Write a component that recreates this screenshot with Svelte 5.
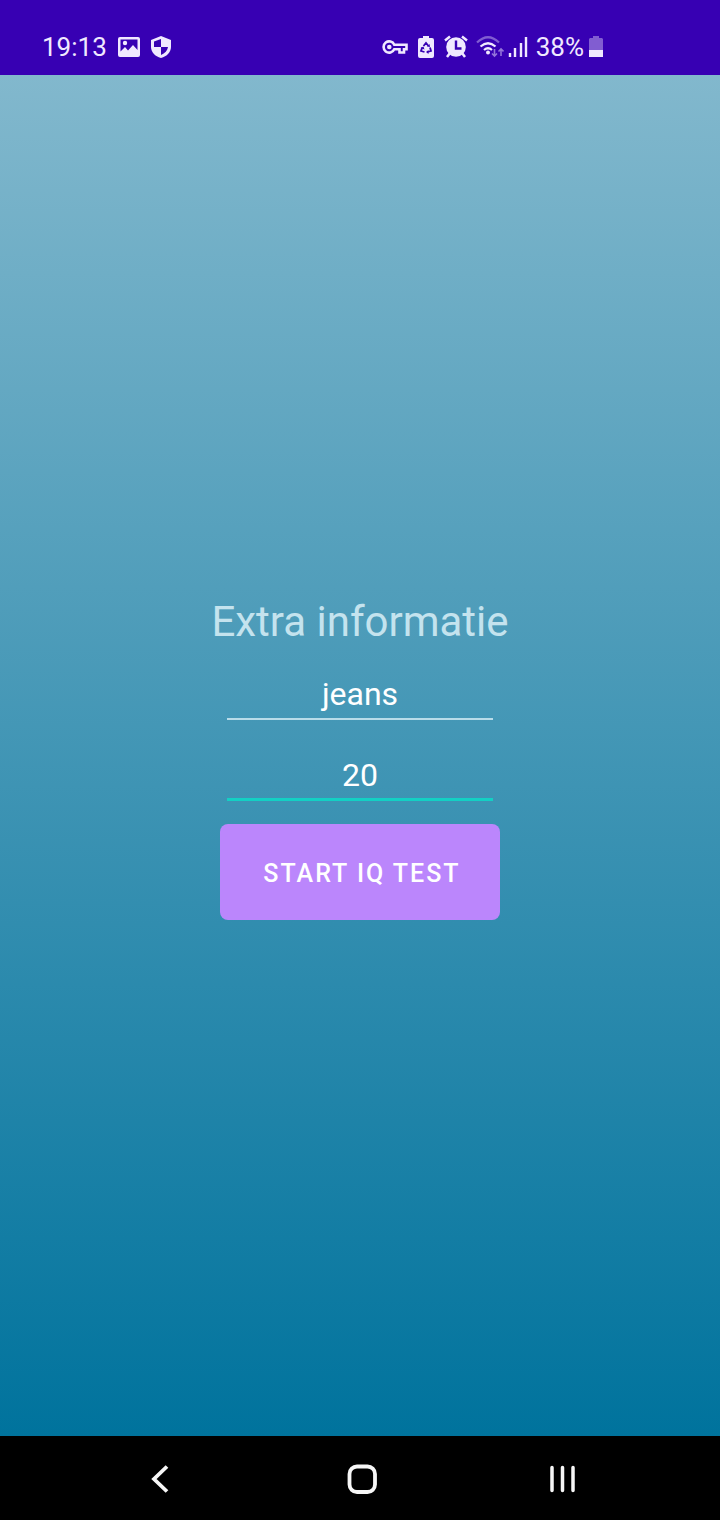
<script>
  let name = $state('jeans');
  let age = $state('20');
</script>

<div class="screen">
  <header>
    <div class="left">
      <span>19:13</span>
      <svg class="photo" width="22" height="22" viewBox="0 0 22 22" aria-hidden="true">
        <path fill="currentColor" fill-rule="evenodd" d="M2 1h18q2 0 2 2v16q0 2-2 2H2q-2 0-2-2V3Q0 1 2 1ZM2.500 3.500v12l4.500-4.500 3 3.500 5-5.500 4.500 5V3.500Z" />
        <circle cx="7" cy="7" r="2.200" fill="currentColor" />
      </svg>
      <svg width="20" height="24" viewBox="0 0 20 24" aria-hidden="true">
        <path fill="currentColor" fill-rule="evenodd" d="M10 1 0 5v7c0 5 4 9.500 10 11 6-1.500 10-6 10-11V5ZM10 4v8h7c-.5 3.500-3 6.500-7 8v-8H3V6.500Z" />
      </svg>
    </div>
    <div class="right">
      <svg width="26" height="24" viewBox="0 0 26 24" aria-hidden="true">
        <path fill="none" stroke="currentColor" stroke-width="2.600" d="M12.300 9.700A5.600 5.600 0 1 0 12.300 14.300H17.500V17.500H22V14.300H24.500V9.700Z" />
        <circle cx="7.300" cy="12" r="2.300" fill="currentColor" />
      </svg>
      <svg class="saver" width="16" height="24" viewBox="0 0 16 24" aria-hidden="true">
        <path fill="currentColor" d="M5 1h6v2h3q2 0 2 2v16q0 2-2 2H2q-2 0-2-2V5q0-2 2-2h3Z" />
        <path fill="none" stroke="#3700b3" stroke-width="1.800" d="m5.500 11 2.500-3 2.500 3M12 12.500l1 3.500-3.500 1M6.500 17 3 16l1.200-3.500" />
        <path fill="#3700b3" d="m9 11.500 3 .5-.5-3zM10.500 15v4L8 17zM2.500 13l3-1.500 1 3z" />
      </svg>
      <svg class="alarm" width="24" height="24" viewBox="0 0 24 24" aria-hidden="true">
        <circle cx="12" cy="12" r="9.800" fill="currentColor" />
        <path fill="none" stroke="currentColor" stroke-width="2.500" d="m1 5.500 5-4M23 5.500l-5-4M6 18l-3 4M18 18l3 4" />
        <path fill="none" stroke="#3700b3" stroke-width="2.400" d="M12 5.500v8h5.500" />
      </svg>
      <svg class="wifi" width="28" height="24" viewBox="0 0 28 24" aria-hidden="true">
        <g fill="none" stroke="currentColor" stroke-width="2.200">
          <path opacity=".4" d="M1 7.500Q12-3 23 7.500" />
          <path d="M4.500 11.500q7.500-6.500 15 0M8 15q4-3.500 8 0" />
        </g>
        <circle cx="12" cy="17.500" r="2" fill="currentColor" />
        <path opacity=".5" fill="none" stroke="currentColor" stroke-width="1.600" d="M18.500 14v7M16 18.500l2.500 2.500 2.500-2.500M25 21v-7M22.500 16.500 25 14l2.500 2.500" />
      </svg>
      <svg class="signal" width="20" height="24" viewBox="0 0 20 24" aria-hidden="true">
        <path fill="none" stroke="currentColor" stroke-width="2.400" d="M2 18v4M7 13v9M13 8v14M18 2v20" />
      </svg>
      <span>38%</span>
      <svg class="battery" width="14" height="24" viewBox="0 0 14 24" aria-hidden="true">
        <path opacity=".4" fill="currentColor" d="M4 1h6v2h3l1 1v11H0V4l1-1h3Z" />
        <path fill="currentColor" d="M0 15h14v7H0Z" />
      </svg>
    </div>
  </header>

  <main>
    <form onsubmit={(event) => event.preventDefault()}>
      <h1>Extra informatie</h1>
      <input type="text" aria-label="Naam" bind:value={name} />
      <input class="active" type="text" inputmode="numeric" aria-label="Leeftijd" bind:value={age} />
      <button class="start" type="submit">START IQ TEST</button>
    </form>
  </main>

  <nav>
    <button aria-label="Terug">
      <svg width="32" height="32" viewBox="0 0 32 32"><path fill="none" stroke="currentColor" stroke-width="3.800" d="M23 3.500 10 16l13 12.500" /></svg>
    </button>
    <button aria-label="Startscherm">
      <svg width="32" height="32" viewBox="0 0 32 32"><rect x="3.500" y="3.500" width="25.500" height="25.500" rx="7.500" fill="none" stroke="currentColor" stroke-width="3.800" /></svg>
    </button>
    <button aria-label="Recente apps">
      <svg width="32" height="32" viewBox="0 0 32 32"><path fill="none" stroke="currentColor" stroke-width="3.500" stroke-linecap="round" d="M5 4.500v23M15.500 4.500v23M26 4.500v23" /></svg>
    </button>
  </nav>
</div>

<style>
  :global(body) {
    margin: 0;
  }
  .screen {
    display: flex;
    flex-direction: column;
    min-height: 100vh;
    font-family: Roboto, sans-serif;
    color: #fff;
  }
  header {
    display: flex;
    justify-content: space-between;
    box-sizing: border-box;
    min-height: 75px;
    padding: 19px 117px 0 42px;
    background: #3700b3;
    color: #f0e8ff;
    font-size: 26px;
    line-height: 56px;
  }
  .left,
  .right {
    display: flex;
    align-items: center;
  }
  .left {
    gap: 11px;
  }
  .right {
    gap: 10px;
  }
  svg {
    display: block;
    flex: none;
  }
  .wifi {
    margin-left: -2px;
  }
  .signal {
    margin-left: -6px;
  }
  .signal + span {
    margin-left: -2px;
  }
  .battery {
    margin-left: -5px;
  }
  main {
    display: flex;
    flex: 1;
    align-items: center;
    justify-content: center;
    background: linear-gradient(#82b8cd, #00739d);
  }
  form {
    display: flex;
    flex-direction: column;
    align-items: center;
  }
  h1 {
    margin: 0 0 14px;
    font-size: 42px;
    font-weight: 400;
    line-height: 62px;
    color: #c4e3ee;
  }
  input {
    box-sizing: border-box;
    width: 266px;
    height: 53px;
    margin: 0 0 28px;
    padding: 3px 0 0;
    border: 0;
    border-bottom: 2px solid #b9dce9;
    border-radius: 0;
    outline: 0;
    background: none;
    color: #fff;
    font: 400 32px Roboto, sans-serif;
    text-align: center;
  }
  .active {
    margin-bottom: 23px;
    border-bottom: 3px solid #13d0c4;
  }
  button {
    border: 0;
    color: #fff;
    font-family: Roboto, sans-serif;
  }
  .start {
    width: 280px;
    height: 96px;
    padding: 3px 0 0 4px;
    border-radius: 8px;
    background: #bb86fc;
    font-size: 25px;
    font-weight: 500;
    letter-spacing: 2px;
  }
  nav {
    display: grid;
    grid-template-columns: repeat(3, 28%);
    justify-content: center;
    min-height: 84px;
    background: #000;
  }
  nav button {
    display: flex;
    align-items: center;
    justify-content: center;
    padding: 2px 0 0 3px;
    background: none;
    color: #f7f7f7;
  }
</style>
